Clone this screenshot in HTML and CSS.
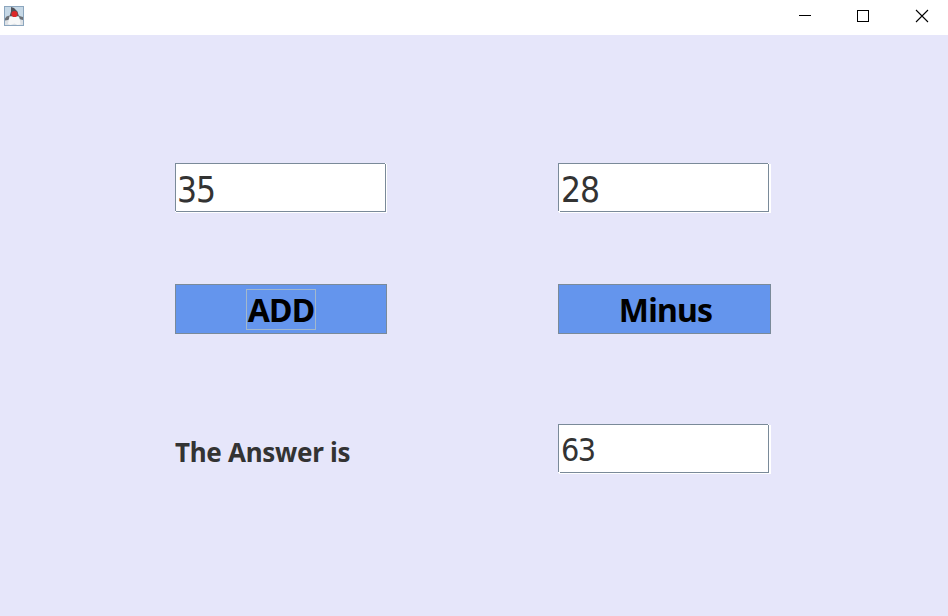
FILE: index.html
```html
<!DOCTYPE html>
<html lang="en">
<head>
<meta charset="utf-8">
<title>Calculator</title>
<link rel="stylesheet" href="styles.css">
</head>
<body>
<header class="titlebar">
  <svg class="app-icon" width="20" height="20" viewBox="0 0 20 20">
    <rect x=".5" y=".5" width="19" height="19" fill="#c6d8e6" stroke="#8ca6be"/>
    <path d="M1 14h18v5H1z" fill="#dde1e5"/>
    <path d="M5.500 9.500L2.500 10.500 1 12.500v2l3-.5 2-1.500zM14.500 9.500l2.500 1 2 .5v3l-2-.5-3-1.500z" fill="#6c7076"/>
    <path d="M7 1l3 1 3.500 3.500 1.500 5H5.500l1.500-5z" fill="#505258"/>
    <path d="M5.500 10.500h9.500l1 4 .5 4-3 .5-3-1.500-4 1.500-2.500-1 .8-4z" fill="#f7f8f8"/>
    <circle cx="10.500" cy="8" r="3.100" fill="#dc2828"/>
  </svg>
  <div class="controls">
    <svg class="control" width="58" height="35" viewBox="0 0 58 35" shape-rendering="crispEdges"><path d="M23 15.500h12" stroke="#000"/></svg>
    <svg class="control" width="58" height="35" viewBox="0 0 58 35" shape-rendering="crispEdges"><rect x="23.500" y="10.500" width="11" height="11" fill="none" stroke="#000"/></svg>
    <svg class="control" width="58" height="35" viewBox="0 0 58 35"><path d="M24 10l12 12M36 10l-12 12" stroke="#000" stroke-width="1.100"/></svg>
  </div>
</header>
<main class="form">
  <div class="field"><span class="value">35</span></div>
  <div class="field wide"><span class="value">28</span></div>
  <button class="btn"><span class="label focused"><span class="caption">ADD</span></span></button>
  <button class="btn wide"><span class="label"><span class="caption minus">Minus</span></span></button>
  <div class="answer">The Answer is</div>
  <div class="field wide result"><span class="value">63</span></div>
</main>
</body>
</html>
```
FILE: styles.css
```css
* { box-sizing: border-box; }
body {
  margin: 0;
  height: 616px;
  overflow: hidden;
  background: #e6e6fa;
  color: #333;
  font-family: "DejaVu Sans Condensed", "DejaVu Sans", sans-serif;
  font-stretch: condensed;
}
.titlebar {
  height: 35px;
  background: #fff;
  display: flex;
  justify-content: space-between;
  padding-left: 4px;
}
.app-icon { margin-top: 6px; }
.controls { display: flex; }
.control { display: block; }
.controls .control:last-child { margin-right: -2px; }
.form {
  display: grid;
  grid-template-columns: 212px 213px;
  grid-template-rows: 50px 50px 50px;
  column-gap: 171px;
  padding: 128px 0 0 175px;
}
.form > :nth-child(n+3) { margin-top: 71px; }
.form > :nth-child(n+5) { margin-top: 161px; }
.field {
  position: relative;
  width: 211px;
  height: 49px;
  border: 1px solid #7a8a99;
  background: #fff;
  box-shadow: 1px 1px 0 #fff;
  padding-left: 1px;
}
/* etched corners */
.field::before,
.field::after {
  content: "";
  position: absolute;
  width: 1px;
  height: 1px;
  background: #fff;
}
.field::before { top: -1px; right: -1px; }
.field::after { bottom: -1px; left: -1px; }
.field.wide { box-shadow: 1px 1px 0 #fff, 2px 1px 0 #fff; padding-left: 2px; }
.field.wide::after { width: 2px; }
.value {
  display: block;
  font-size: 35px;
  line-height: 52px;
  letter-spacing: -1px;
}
.result .value { font-size: 32px; line-height: 51px; letter-spacing: -1.6px; }
.btn {
  width: 212px;
  height: 50px;
  border: 1px solid #7a8a99;
  background: #6495ed;
  padding: 0;
  display: flex;
  align-items: center;
  justify-content: center;
  color: #000;
  font: bold 32px/40px "Noto Sans", sans-serif;
}
.btn.wide { width: 213px; }
.label {
  height: 41px;
  width: 70px;
  border: 1px solid transparent;
  display: flex;
  justify-content: center;
}
.label.focused { border-color: #a3b8cc; }
.caption { letter-spacing: -0.8px; }
.caption.minus { letter-spacing: -0.8px; padding-left: 2px; }
.answer { font: bold 26px/56px "Noto Sans", sans-serif; letter-spacing: -0.3px; white-space: nowrap; }
```
